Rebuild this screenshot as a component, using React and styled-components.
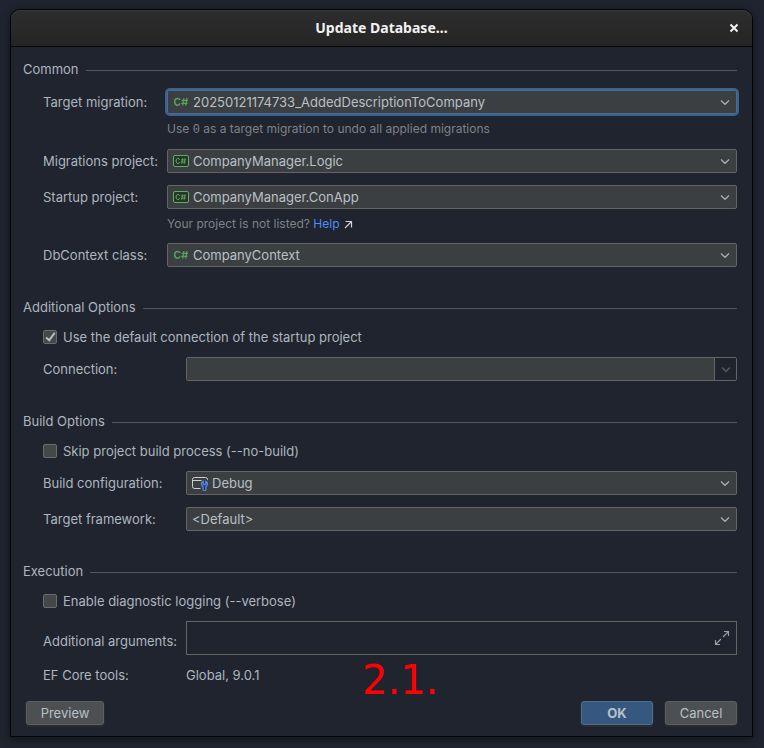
import React from "react";
import styled, { createGlobalStyle, css } from "styled-components";

const GlobalStyle = createGlobalStyle`
  *, *::before, *::after { box-sizing: border-box; }
  body {
    margin: 0;
    padding: 9px 11px 11px 10px;
    background: #1f2430;
    color: #adb6be;
    font: 13px/20px Inter, "Liberation Sans", sans-serif;
  }
  button, input, select { font: inherit; color: inherit; margin: 0; }
`;

const Dialog = styled.section`
  position: relative;
  border: 1px solid #030405;
  border-radius: 10px 10px 0 0;
  background: #20242f;
  box-shadow: 0 2px 10px rgba(0, 0, 0, 0.45);
`;

const TitleBar = styled.header`
  display: grid;
  grid-template-columns: 36px 1fr 36px;
  align-items: center;
  height: 37px;
  border-bottom: 1px solid #060607;
  border-radius: 9px 9px 0 0;
  background: linear-gradient(#2d2d2d, #252525);
  box-shadow: inset 0 1px 0 #383838;
`;

const Title = styled.h1`
  grid-column: 2;
  margin: 0;
  text-align: center;
  color: #f2f2f2;
  font: 700 14px/20px "Noto Sans", sans-serif;
`;

const CloseButton = styled.button`
  display: grid;
  place-items: center;
  width: 36px;
  height: 36px;
  padding: 0;
  border: 0;
  background: none;
  color: #f2f2f2;
`;

const Form = styled.form`
  padding: 12px 15px 11px 12px;
`;

const Section = styled.fieldset`
  margin: 0 0 ${(p) => p.$after}px;
  padding: 0;
  border: 0;
  min-width: 0;
`;

const Legend = styled.legend`
  display: flex;
  align-items: center;
  gap: 7px;
  width: 100%;
  height: 20px;
  padding: 0;

  &::after {
    content: "";
    flex: 1;
    height: 1px;
    margin-top: 2px;
    background: #55575a;
  }
`;

const Row = styled.div`
  display: grid;
  grid-template-columns: ${(p) => (p.$wide ? 143 : 124)}px minmax(0, 1fr);
  align-items: center;
  min-height: 24px;
  margin-top: ${(p) => p.$before}px;
  padding-left: 20px;
`;

const Label = styled.label`
  padding-top: ${(p) => (p.$low ? 6 : 0)}px;
  white-space: nowrap;
`;

const Hint = styled.p`
  height: 18px;
  margin: 6px 0 0 144px;
  color: #7e8287;
  font-size: 12px;
  line-height: 18px;
`;

const Code = styled.code`
  font: 12px/16px "Liberation Mono", monospace;
`;

const HelpLink = styled.a`
  color: #548af7;
  text-decoration: none;

  svg {
    margin-left: 4px;
    vertical-align: -1px;
  }
`;

const Combo = styled.div`
  position: relative;
  height: 24px;
  border-radius: 2px;
  ${(p) =>
    p.$focused &&
    css`
      box-shadow: 0 0 0 2px #3b6390;
      border-radius: 3px;
    `}
`;

const Select = styled.select`
  display: block;
  width: 100%;
  height: 24px;
  padding: 0 24px 0 ${(p) => (p.$icon ? 25 : 5)}px;
  border: 1px solid ${(p) => (p.$focused ? "#466d94" : "#646464")};
  border-radius: 2px;
  outline: none;
  appearance: none;
  background: #3c3f41;
  color: #b8c0c7;
`;

const LeadIcon = styled.span`
  position: absolute;
  top: 4px;
  left: 6px;
  display: flex;
  pointer-events: none;
`;

const ArrowIcon = styled.span`
  position: absolute;
  top: 8px;
  right: 6px;
  display: flex;
  pointer-events: none;
`;

const EditableCombo = styled.div`
  display: flex;
  height: 24px;
  border: 1px solid #646464;
  border-radius: 2px;
  overflow: hidden;
`;

const ComboInput = styled.input`
  flex: 1;
  min-width: 0;
  padding: 0 6px;
  border: 0;
  outline: none;
  background: #3c3f41;
`;

const ComboButton = styled.button`
  display: grid;
  place-items: center;
  width: 22px;
  padding: 0;
  border: 0;
  border-left: 1px solid #646464;
  background: #20242f;
`;

const CheckRow = styled.label`
  display: flex;
  align-items: center;
  gap: 6px;
  height: 20px;
  margin-top: ${(p) => p.$before}px;
  padding-left: 20px;
`;

const Checkbox = styled.input`
  display: grid;
  place-items: center;
  width: 14px;
  height: 14px;
  border: 1px solid #6b6b6b;
  border-radius: 2px;
  appearance: none;
  background: #43494a;

  &:checked::before {
    content: "";
    width: 5px;
    height: 10px;
    margin-bottom: 2px;
    border: solid #b9bdc0;
    border-width: 0 2px 2px 0;
    transform: rotate(38deg);
  }
`;

const ArgumentsBox = styled.div`
  display: flex;
  height: 34px;
  border: 1px solid #646464;
`;

const ArgumentsInput = styled.input`
  flex: 1;
  min-width: 0;
  padding: 0 6px;
  border: 0;
  outline: none;
  background: transparent;
`;

const ExpandButton = styled.button`
  display: grid;
  place-items: center;
  width: 28px;
  padding: 0;
  border: 0;
  background: none;
`;

const Footer = styled.footer`
  display: flex;
  gap: 12px;
  margin-top: 14px;
  padding-left: 3px;
`;

const Button = styled.button`
  min-width: ${(p) => (p.$first ? 78 : 72)}px;
  height: 24px;
  margin-right: ${(p) => (p.$first ? "auto" : "0")};
  padding: 0 12px;
  border: 1px solid ${(p) => (p.$primary ? "#4c708c" : "#5e6060")};
  border-radius: 3px;
  background: ${(p) => (p.$primary ? "#365880" : "#4c5052")};
  box-shadow: 0 1px 1px 1px rgba(50, 52, 54, 0.5);
  color: #b8c0c7;
  font-weight: ${(p) => (p.$primary ? 700 : 400)};
  line-height: 20px;
`;

const StepMark = styled.span`
  position: absolute;
  left: 351px;
  bottom: 32px;
  color: #f00;
  font: 40px/48px "DejaVu Sans", sans-serif;
  pointer-events: none;
`;

const Chevron = ({ color = "#afb1b3" }) => (
  <svg width="12" height="8" viewBox="0 0 12 8" fill="none" stroke={color} strokeWidth="1.2" aria-hidden="true">
    <path d="M2 2.5 6 6.3 10 2.5" />
  </svg>
);

const CSharpIcon = () => (
  <svg width="16" height="16" viewBox="0 0 16 16" fill="none" stroke="#57a35c" strokeWidth="1.5" aria-hidden="true">
    <path d="M7 6.1C6.6 5 5.7 4.4 4.5 4.4 2.8 4.4 1.7 5.7 1.7 7.8s1.1 3.4 2.8 3.4C5.7 11.2 6.7 10.6 7 9.4" />
    <path strokeWidth="1.2" d="M10.9 4 9.7 11.7M13.9 4 12.7 11.7M8.7 6.4H15M8.2 9.4H14.5" />
  </svg>
);

const CSharpProjectIcon = () => (
  <svg width="16" height="16" viewBox="0 0 16 16" fill="none" stroke="#5fad65" aria-hidden="true">
    <rect x=".5" y="2.5" width="15" height="11" rx="1.5" fill="#253627" />
    <path d="M6.6 6.7C6.3 5.9 5.8 5.5 5 5.5 3.8 5.5 3.1 6.5 3.1 8s.7 2.5 1.9 2.5c.8 0 1.4-.4 1.6-1.3" />
    <path strokeWidth=".8" d="M9.7 5.1 8.7 10.9M12.1 5.1 11.1 10.9M8 6.9H13M7.7 9.1H12.7" />
  </svg>
);

const BuildConfigIcon = () => (
  <svg width="16" height="16" viewBox="0 0 16 16" fill="none" stroke="#ced0d6" aria-hidden="true">
    <path d="M8.5 13.5H2.5a2 2 0 0 1-2-2v-7a2 2 0 0 1 2-2h11a2 2 0 0 1 2 2V5M1 5.5H9.5" />
    <path
      stroke="#548af7"
      strokeWidth="1.2"
      fill="#25324d"
      d="M11.1 6.2C9.9 6.8 9.4 7.8 9.4 8.9c0 1.1.7 2 1.7 2.5V14.5c0 .7.6 1.1 1.4 1.1s1.4-.4 1.4-1.1v-3.1c1-.5 1.6-1.4 1.6-2.5 0-1.1-.5-2.1-1.6-2.7v2.6l-1.4.9-1.4-.9Z"
    />
  </svg>
);

const ExternalIcon = () => (
  <svg width="9" height="9" viewBox="0 0 9 9" fill="none" stroke="#ced0d6" strokeWidth="1.2" aria-hidden="true">
    <path d="M1.5 1.5H7.5V7.5M7.5 1.5 1 8" />
  </svg>
);

const ExpandIcon = () => (
  <svg width="16" height="16" viewBox="0 0 16 16" fill="none" stroke="#9da0a5" strokeWidth="1.1" aria-hidden="true">
    <path d="M10 1.5H14.5V6M14.5 1.5 9 7M1.5 10V14.5H6M1.5 14.5 7 9" />
  </svg>
);

const CloseIcon = () => (
  <svg width="10" height="10" viewBox="0 0 10 10" fill="none" stroke="currentColor" strokeWidth="2" aria-hidden="true">
    <path d="M1.5 1.5 8.5 8.5M8.5 1.5 1.5 8.5" />
  </svg>
);

function ComboRow({ id, label, value, icon, wide, focused, before }) {
  return (
    <Row $wide={wide} $before={before}>
      <Label htmlFor={id}>{label}</Label>
      <Combo $focused={focused}>
        <Select id={id} $icon={Boolean(icon)} $focused={focused} defaultValue={value}>
          <option>{value}</option>
        </Select>
        {icon && <LeadIcon>{icon}</LeadIcon>}
        <ArrowIcon>
          <Chevron />
        </ArrowIcon>
      </Combo>
    </Row>
  );
}

export default function App() {
  return (
    <>
      <GlobalStyle />
      <Dialog role="dialog" aria-labelledby="dialog-title">
        <TitleBar>
          <Title id="dialog-title">Update Database…</Title>
          <CloseButton type="button" aria-label="Close">
            <CloseIcon />
          </CloseButton>
        </TitleBar>
        <Form onSubmit={(e) => e.preventDefault()}>
          <Section $after={30}>
            <Legend>Common</Legend>
            <ComboRow
              id="target-migration"
              label="Target migration:"
              value="20250121174733_AddedDescriptionToCompany"
              icon={<CSharpIcon />}
              before={11}
              focused
            />
            <Hint>
              Use <Code>0</Code> as a target migration to undo all applied migrations
            </Hint>
            <ComboRow
              id="migrations-project"
              label="Migrations project:"
              value="CompanyManager.Logic"
              icon={<CSharpProjectIcon />}
              before={11}
            />
            <ComboRow
              id="startup-project"
              label="Startup project:"
              value="CompanyManager.ConApp"
              icon={<CSharpProjectIcon />}
              before={12}
            />
            <Hint>
              Your project is not listed?{" "}
              <HelpLink href="#help">
                Help
                <ExternalIcon />
              </HelpLink>
            </Hint>
            <ComboRow
              id="dbcontext"
              label="DbContext class:"
              value="CompanyContext"
              icon={<CSharpIcon />}
              before={10}
            />
          </Section>

          <Section $after={30}>
            <Legend>Additional Options</Legend>
            <CheckRow $before={10}>
              <Checkbox type="checkbox" defaultChecked />
              Use the default connection of the startup project
            </CheckRow>
            <Row $wide $before={10}>
              <Label htmlFor="connection">Connection:</Label>
              <EditableCombo>
                <ComboInput id="connection" type="text" disabled />
                <ComboButton type="button" aria-label="Show connections" disabled>
                  <Chevron color="#5c5f64" />
                </ComboButton>
              </EditableCombo>
            </Row>
          </Section>

          <Section $after={30}>
            <Legend>Build Options</Legend>
            <CheckRow $before={10}>
              <Checkbox type="checkbox" />
              Skip project build process (--no-build)
            </CheckRow>
            <ComboRow
              id="build-configuration"
              label="Build configuration:"
              value="Debug"
              icon={<BuildConfigIcon />}
              before={10}
              wide
            />
            <ComboRow id="target-framework" label="Target framework:" value="<Default>" before={12} wide />
          </Section>

          <Section $after={0}>
            <Legend>Execution</Legend>
            <CheckRow $before={10}>
              <Checkbox type="checkbox" />
              Enable diagnostic logging (--verbose)
            </CheckRow>
            <Row $wide $before={10}>
              <Label htmlFor="arguments" $low>
                Additional arguments:
              </Label>
              <ArgumentsBox>
                <ArgumentsInput id="arguments" type="text" />
                <ExpandButton type="button" aria-label="Expand">
                  <ExpandIcon />
                </ExpandButton>
              </ArgumentsBox>
            </Row>
            <Row $wide $before={8}>
              <span>EF Core tools:</span>
              <span>Global, 9.0.1</span>
            </Row>
          </Section>

          <Footer>
            <Button type="button" $first>
              Preview
            </Button>
            <Button type="submit" $primary>
              OK
            </Button>
            <Button type="button">Cancel</Button>
          </Footer>
        </Form>
        <StepMark>2.1.</StepMark>
      </Dialog>
    </>
  );
}
